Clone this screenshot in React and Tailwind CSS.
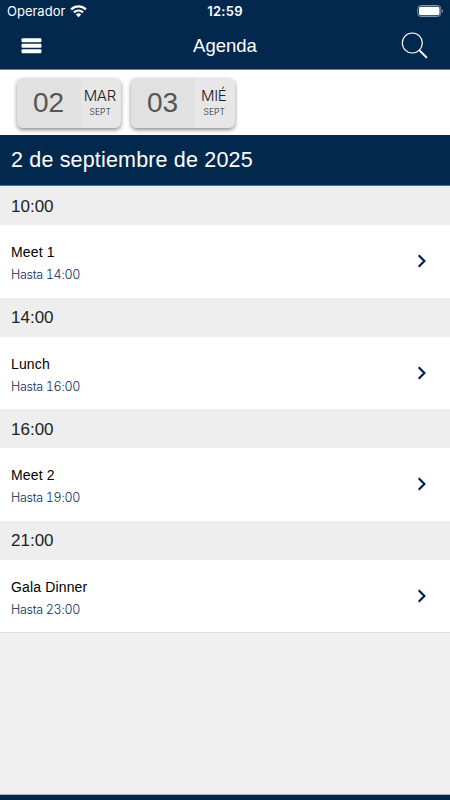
const days = [
  { number: '02', weekday: 'MAR', month: 'SEPT' },
  { number: '03', weekday: 'MIÉ', month: 'SEPT' }
]

const events = [
  { start: '10:00', title: 'Meet 1', until: 'Hasta 14:00' },
  { start: '14:00', title: 'Lunch', until: 'Hasta 16:00' },
  { start: '16:00', title: 'Meet 2', until: 'Hasta 19:00' },
  { start: '21:00', title: 'Gala Dinner', until: 'Hasta 23:00' }
]

const StatusBar = () => (
  <div className="grid h-[22px] grid-cols-3 items-center pl-[7px] pr-[6px] font-['Inter',sans-serif]">
    <div className="flex items-center gap-[5px]">
      <span className="pt-[2px] text-[13px]">Operador</span>
      <svg className="h-[13px] w-[17px]" viewBox="0 0 17 13" fill="none" stroke="currentColor">
        <path d="M1.1 4.4a10.5 10.5 0 0 1 14.8 0" strokeWidth="2.4" />
        <path d="M3.9 7.4a6.5 6.5 0 0 1 9.2 0" strokeWidth="2.2" />
        <path d="M8.5 12.3 5.8 9.6a3.8 3.8 0 0 1 5.4 0Z" fill="currentColor" stroke="none" />
      </svg>
    </div>
    <span className="pr-px pt-[2px] text-center text-[13px] font-semibold tracking-[0.3px]">12:59</span>
    <svg className="h-3 w-[27px] justify-self-end" viewBox="0 0 27 12">
      <rect x="0.75" y="0.5" width="23" height="11" rx="3.2" fill="none" stroke="#8695a8" />
      <rect x="2" y="1.8" width="20.5" height="8.4" rx="1.6" fill="#fff" />
      <path d="M25 4.2c1.5.4 1.5 3.2 0 3.6Z" fill="#8695a8" />
    </svg>
  </div>
)

const Header = () => (
  <header className="h-[70px] border-b border-[#6d7f95] bg-[#02294d] text-white">
    <StatusBar />
    <div className="grid h-[47px] grid-cols-3 items-center pl-[21px] pr-[22px]">
      <svg className="h-4 w-[21px]" viewBox="0 0 21 16" fill="currentColor">
        <rect x="0.5" y="0.2" width="20" height="4" rx="1.2" />
        <rect x="0.5" y="5.7" width="20" height="4" rx="1.2" />
        <rect x="0.5" y="11.2" width="20" height="4" rx="1.2" />
      </svg>
      <h1 className="pl-px text-center text-[18.5px]">Agenda</h1>
      <svg className="h-[27px] w-[27px] justify-self-end" viewBox="0 0 27 27" fill="none" stroke="currentColor">
        <circle cx="11.3" cy="11" r="10" strokeWidth="1.2" />
        <path d="m18.5 18.4 6.8 6.8" strokeWidth="2" strokeLinecap="round" />
      </svg>
    </div>
  </header>
)

const DayButton = ({ day }) => (
  <button className="flex h-[50px] w-[104.5px] overflow-hidden rounded-[6px] bg-[#e7e7e7] font-['Inter',sans-serif] font-light shadow-[0_2px_4px_rgba(0,0,0,0.45)]">
    <span className="flex h-full w-16 items-center justify-center bg-[#e1e1e1] font-['Liberation_Sans',Arial,sans-serif] text-[28px] text-[#555]">
      {day.number}
    </span>
    <span className="flex h-full flex-1 flex-col items-center pt-[9px] text-[#222]">
      <span className="-ml-[2px] text-[15px] leading-[18px] tracking-[-0.3px]">{day.weekday}</span>
      <span className="-ml-px mt-[2px] text-[8.5px] leading-[10px] tracking-[0.1px]">{day.month}</span>
    </span>
  </button>
)

const AgendaItem = ({ event }) => (
  <li>
    <div className="flex h-[39px] items-center bg-[#eeeeee] px-[11px] pt-[1.5px] text-[17px] text-[#222]">
      {event.start}
    </div>
    <div className="flex h-[72.6px] items-center justify-between bg-white pl-[11px] pr-[23px]">
      <div className="pt-[5px]">
        <p className="text-[14px] leading-[22px] tracking-[0.15px] text-black">{event.title}</p>
        <p className="pt-px font-['Inter',sans-serif] text-[12.5px] font-light leading-[22px] tracking-[-0.3px] text-[#0c2b5c] tabular-nums">
          {event.until}
        </p>
      </div>
      <svg className="h-[14px] w-[10px]" viewBox="0 0 10 14" fill="none" stroke="#02204d" strokeWidth="2.2">
        <path d="m1.7 1.3 5.7 5.7-5.7 5.7" />
      </svg>
    </div>
  </li>
)

export default function App() {
  return (
    <div className="flex h-[800px] w-[450px] flex-col overflow-hidden bg-[#f0f0f0] font-['Liberation_Sans',Arial,sans-serif]">
      <Header />
      <nav className="flex h-[65px] gap-[9.5px] bg-white pl-[16.5px] pt-[7.5px]">
        {days.map((day) => (
          <DayButton key={day.number} day={day} />
        ))}
      </nav>
      <h2 className="flex h-[51px] items-center border-b border-[#526984] bg-[#02294d] px-[11px] pt-px text-[21.5px] tracking-[0.17px] text-white">
        2 de septiembre de 2025
      </h2>
      <ul className="border-b border-[#dddddd]">
        {events.map((event) => (
          <AgendaItem key={event.start} event={event} />
        ))}
      </ul>
      <footer className="mt-auto h-[6px] border-t border-[#a9b3bd] bg-[#02294d]"></footer>
    </div>
  )
}
